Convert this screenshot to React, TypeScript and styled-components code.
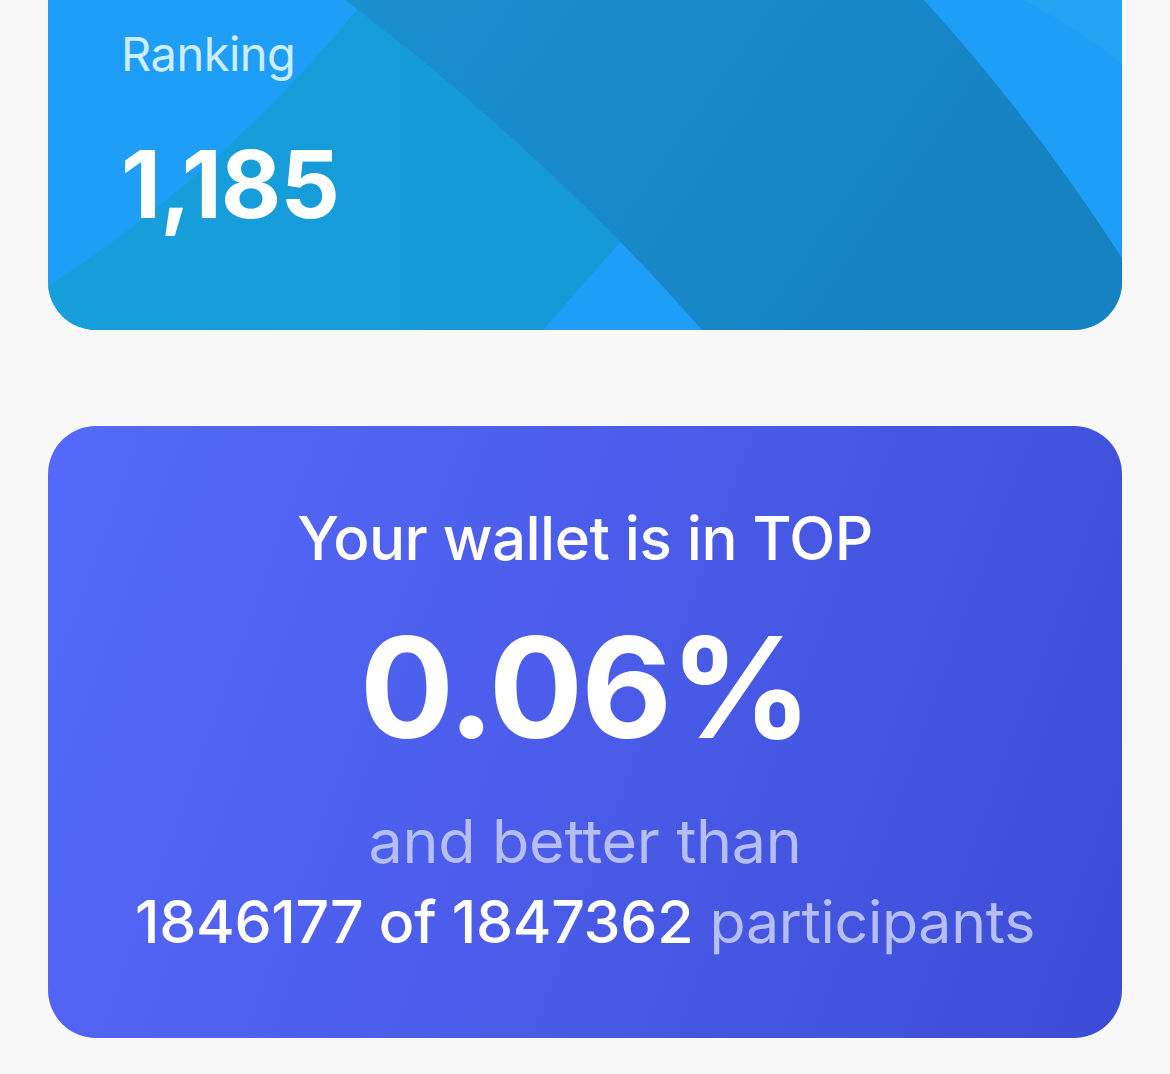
import React from 'react'
import styled, { createGlobalStyle } from 'styled-components'

const GlobalStyle = createGlobalStyle`
  html, body {
    margin: 0;
    padding: 0;
    background: #f8f8f8;
  }
  body {
    font-family: Inter, 'Noto Sans', 'Liberation Sans', sans-serif;
    -webkit-font-smoothing: antialiased;
  }
`

const Page = styled.div`
  width: 1170px;
  min-height: 1074px;
  padding: 0 48px;
  box-sizing: border-box;
  display: flex;
  flex-direction: column;
  gap: 96px;
`

const RankCard = styled.div`
  position: relative;
  height: 330px;
  border-radius: 0 0 48px 48px;
  background: #1e9ef6;
  overflow: hidden;
`

const Decor = styled.svg`
  position: absolute;
  inset: 0;
  width: 100%;
  height: 100%;
`

const RankContent = styled.div`
  position: relative;
  padding: 26px 0 0 73px;
  display: flex;
  flex-direction: column;
`

const RankLabel = styled.div`
  font-size: 47px;
  font-weight: 400;
  color: #cdeefe;
  line-height: 56px;
  letter-spacing: -0.5px;
`

const RankValue = styled.div`
  margin-top: 52px;
  font-size: 93px;
  font-weight: 700;
  color: #ffffff;
  line-height: 100px;
  letter-spacing: -1px;
`

const TopCard = styled.div`
  height: 612px;
  border-radius: 48px;
  background: linear-gradient(110deg, #5569fa 0%, #4a5ce8 50%, #3c4cd6 100%);
  display: flex;
  flex-direction: column;
  align-items: center;
  padding-top: 74px;
  box-sizing: border-box;
  color: #ffffff;
  text-align: center;
`

const Headline = styled.div`
  font-size: 60px;
  font-weight: 500;
  line-height: 76px;
  letter-spacing: -0.5px;
`

const Percent = styled.div`
  margin-top: 36px;
  font-size: 140px;
  font-weight: 700;
  line-height: 150px;
  letter-spacing: -2px;
`

const Line = styled.div<{ $size: number }>`
  font-size: ${(p) => p.$size}px;
  line-height: 76px;
  letter-spacing: -0.3px;
`

const Muted = styled.span`
  color: #b6bff3;
  font-weight: 400;
`

const Strong = styled.span`
  color: #ffffff;
  font-weight: 500;
`

const Details = styled.div`
  margin-top: 41px;
  display: flex;
  flex-direction: column;
  gap: 5px;
`

export default function App() {
  return (
    <>
      <GlobalStyle />
      <Page>
        <RankCard>
          <Decor viewBox="0 0 1074 330" preserveAspectRatio="none">
            <defs>
              <linearGradient id="teal" x1="0" y1="0" x2="1" y2="0">
                <stop offset="0" stopColor="#179fdc" />
                <stop offset="1" stopColor="#1497d3" />
              </linearGradient>
              <linearGradient id="deep" x1="0" y1="0" x2="1" y2="0.3">
                <stop offset="0" stopColor="#1a90cf" />
                <stop offset="1" stopColor="#1582c2" />
              </linearGradient>
            </defs>
            <path d="M974 0 L1074 0 L1074 64 Q1030 28 974 0 Z" fill="#24a3f3" />
            <path d="M0 286 Q180 170 317 0 L785 0 L495 330 L0 330 Z" fill="url(#teal)" />
            <path
              d="M297 0 C410 85 540 200 654 330 L1074 330 L1074 258 Q985 120 876 0 Z"
              fill="url(#deep)"
            />
          </Decor>
          <RankContent>
            <RankLabel>Ranking</RankLabel>
            <RankValue>1,185</RankValue>
          </RankContent>
        </RankCard>

        <TopCard>
          <Headline>Your wallet is in TOP</Headline>
          <Percent>0.06%</Percent>
          <Details>
            <Line $size={61}>
              <Muted>and better than</Muted>
            </Line>
            <Line $size={59}>
              <Strong>1846177 of 1847362</Strong> <Muted>participants</Muted>
            </Line>
          </Details>
        </TopCard>
      </Page>
    </>
  )
}
